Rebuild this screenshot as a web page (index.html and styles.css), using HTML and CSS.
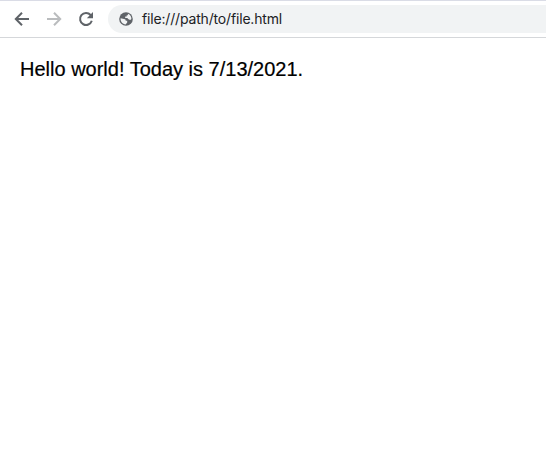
FILE: index.html
```html
<!DOCTYPE html>
<html lang="en">
<head>
<meta charset="utf-8">
<title>file.html</title>
<link rel="stylesheet" href="styles.css">
</head>
<body>
<header class="toolbar">
  <nav class="nav">
    <svg class="icon" viewBox="0 0 20 20"><path d="M17 10H4.2M10 3.8L3.8 10l6.2 6.2"/></svg>
    <svg class="icon disabled" viewBox="0 0 20 20"><path d="M3 10h12.8M10 3.8l6.2 6.2-6.2 6.2"/></svg>
    <svg class="icon" viewBox="0 0 20 20"><path d="M15.8 11.8A6 6 0 1 1 14.6 6L16 7.4"/><path class="tip" d="M17 3v6.2h-6.2z"/></svg>
  </nav>
  <div class="address">
    <svg class="globe" viewBox="0 0 16 16"><circle cx="8" cy="8" r="6.8"/><path class="land" d="M2.6 7.2L6 8.1c1.4.2 1.7.8 1.7 1.7h1.5v1.7L7.6 13.4C4.6 13.2 2.2 10.5 2.6 7.2zM9.9 2.8c2.2.8 3.6 2.9 3.5 5.1l-1.2 1.2-1.7-.9-1.2-1.2H7.2V5.6h1.5V4.2h1.2z"/></svg>
    <span class="url">file:///path/to/file.html</span>
  </div>
</header>
<main class="page">Hello world! Today is 7/13/2021.</main>
</body>
</html>
```
FILE: styles.css
```css
body {
  margin: 0;
  background: #fff;
  overflow: hidden;
}
.toolbar {
  box-sizing: border-box;
  display: flex;
  align-items: center;
  height: 38px;
  padding-left: 12px;
  border-top: 1px solid #dadce6;
  border-bottom: 1px solid #d5d7da;
}
.nav {
  display: flex;
  gap: 12px;
}
.icon {
  width: 20px;
  height: 20px;
  fill: none;
  stroke: #5f6368;
  stroke-width: 2;
}
.disabled {
  stroke: #babcbe;
}
.tip {
  fill: #5f6368;
  stroke: none;
}
.address {
  display: flex;
  flex: 1;
  align-items: center;
  gap: 8px;
  height: 28px;
  margin-left: 12px;
  padding-left: 10px;
  border-radius: 14px 0 0 14px;
  background: #f1f3f4;
}
.globe {
  width: 16px;
  height: 16px;
  fill: #5f6368;
}
.land {
  fill: #f1f3f4;
}
.url {
  font: 14px/20px Inter, sans-serif;
  letter-spacing: -0.17px;
  color: #202124;
  white-space: nowrap;
}
.page {
  padding: 19px 20px;
  font: 20px/24px "Liberation Sans", Arial, sans-serif;
  color: #000;
  -webkit-text-stroke: 0.2px #000;
}
```
